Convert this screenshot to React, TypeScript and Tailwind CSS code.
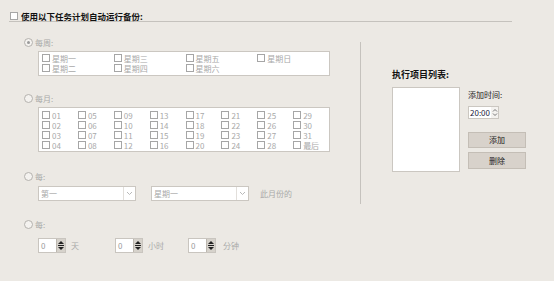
import React from "react";

const weekDays = [
    ["星期一", "星期三", "星期五", "星期日"],
    ["星期二", "星期四", "星期六", ""],
];

const monthRows = [
    ["01", "05", "09", "13", "17", "21", "25", "29"],
    ["02", "06", "10", "14", "18", "22", "26", "30"],
    ["03", "07", "11", "15", "19", "23", "27", "31"],
    ["04", "08", "12", "16", "20", "24", "28", "最后"],
];

const Box = ({ checked = false }: { checked?: boolean }) => (
    <span className="inline-block w-[8px] h-[8px] border border-[#a6a6a6] bg-white shrink-0">
        {checked && <span className="block w-full h-full bg-[#888]" />}
    </span>
);

const Radio = ({ checked = false }: { checked?: boolean }) => (
    <span className="flex items-center justify-center w-[9px] h-[9px] rounded-full border border-[#b4b2ae] bg-[#f4f2ef] shrink-0">
        {checked && <span className="block w-[3px] h-[3px] rounded-full bg-[#9a9a9a]" />}
    </span>
);

const SpinBox = () => (
    <div className="flex w-[28px] h-[15px] border border-[#c9c5bf] bg-white">
        <span className="flex-1 pl-[2px] text-[8px] leading-[13px] text-[#9a9a9a]">0</span>
        <span className="flex flex-col items-center justify-center gap-[1px] w-[9px] bg-[#d6d2cb] border-l border-[#bdb8b0]">
            <span className="w-0 h-0 border-l-[3px] border-r-[3px] border-b-[3px] border-l-transparent border-r-transparent border-b-[#222]" />
            <span className="w-[6px] h-px bg-[#222]" />
            <span className="w-0 h-0 border-l-[3px] border-r-[3px] border-t-[3px] border-l-transparent border-r-transparent border-t-[#222]" />
        </span>
    </div>
);

const Select = ({ value }: { value: string }) => (
    <div className="flex w-[98px] h-[15px] border border-[#cbc7c1] bg-white">
        <span className="flex-1 pl-[2px] text-[8px] leading-[13px] text-[#a8a8a8]">{value}</span>
        <span className="flex items-center justify-center w-[12px] border-l border-[#e2dfdb]">
            <svg width="7" height="5" viewBox="0 0 7 5">
                <path d="M1 1 L3.5 3.5 L6 1" fill="none" stroke="#b9b9b9" strokeWidth="1" />
            </svg>
        </span>
    </div>
);

const App = () => {
    return (
        <div
            className="w-[554px] h-[281px] bg-[#ece9e4] overflow-hidden text-[#a9a9a9]"
            style={{ fontFamily: '"Noto Sans CJK SC", "Liberation Sans", sans-serif' }}
        >
            {/* header */}
            <div className="flex items-center gap-[3px] pl-[10px] pt-[11px] h-[21px]">
                <Box />
                <span className="text-[8.5px] font-bold text-[#111] leading-[10px]">使用以下任务计划自动运行备份:</span>
            </div>
            <div className="ml-[9px] w-[503px] h-px bg-[#c5c2bd]" />

            <div className="flex">
                {/* left column */}
                <div className="w-[337px] pl-[24px]">
                    <div className="flex items-center gap-[2px] mt-[15px] h-[10px]">
                        <Radio checked />
                        <span className="text-[8px] leading-[9px]">每周:</span>
                    </div>
                    <div className="ml-[14px] mt-[4px] w-[292px] h-[25px] border border-[#cbc7c1] bg-white pl-[3px] pt-[1px]">
                        {weekDays.map((row, i) => (
                            <div key={i} className="flex h-[10px] items-center">
                                {row.map((d, j) => (
                                    <div key={j} className="flex items-center gap-[2px] w-[72px]">
                                        {d && (
                                            <>
                                                <Box />
                                                <span className="text-[8px] leading-[9px]">{d}</span>
                                            </>
                                        )}
                                    </div>
                                ))}
                            </div>
                        ))}
                    </div>

                    <div className="flex items-center gap-[2px] mt-[17px] h-[10px]">
                        <Radio />
                        <span className="text-[8px] leading-[9px]">每月:</span>
                    </div>
                    <div className="ml-[14px] mt-[4px] w-[292px] h-[45px] border border-[#cbc7c1] bg-white pl-[3px] pt-[2px]">
                        {monthRows.map((row, i) => (
                            <div key={i} className="flex h-[10px] items-center">
                                {row.map((d, j) => (
                                    <div key={j} className="flex items-center gap-[2px] w-[36px]">
                                        <Box />
                                        <span className="text-[8px] leading-[9px]">{d}</span>
                                    </div>
                                ))}
                            </div>
                        ))}
                    </div>

                    <div className="flex items-center gap-[2px] mt-[19px] h-[10px]">
                        <Radio />
                        <span className="text-[8px] leading-[9px]">每:</span>
                    </div>
                    <div className="flex items-center ml-[14px] mt-[5px]">
                        <Select value="第一" />
                        <div className="ml-[15px]">
                            <Select value="星期一" />
                        </div>
                        <span className="ml-[11px] text-[8px]">此月份的</span>
                    </div>

                    <div className="flex items-center gap-[2px] mt-[18px] h-[10px]">
                        <Radio />
                        <span className="text-[8px] leading-[9px]">每:</span>
                    </div>
                    <div className="flex items-center ml-[14px] mt-[9px]">
                        <SpinBox />
                        <span className="ml-[5px] w-[44px] text-[8px]">天</span>
                        <SpinBox />
                        <span className="ml-[5px] w-[40px] text-[8px]">小时</span>
                        <SpinBox />
                        <span className="ml-[7px] text-[8px]">分钟</span>
                    </div>
                </div>

                {/* divider */}
                <div className="w-px h-[162px] mt-[20px] ml-[23px] bg-[#c5c2bd]" />

                {/* right column */}
                <div className="pl-[31px]">
                    <div className="mt-[48px] h-[10px] text-[9px] font-bold leading-[10px] text-[#111]">执行项目列表:</div>
                    <div className="flex mt-[7px]">
                        <div className="w-[68px] h-[85px] border border-[#cbc7c1] bg-white" />
                        <div className="ml-[8px] flex flex-col">
                            <span className="mt-[3px] text-[8px] leading-[10px] text-[#222]">添加时间:</span>
                            <div className="flex mt-[6px] w-[31px] h-[13px] border border-[#cbc7c1] bg-[#f4f2ef]">
                                <span className="w-[22px] bg-white text-[8px] leading-[11px] text-[#1a1a3a] pl-[1px]">20:00</span>
                                <span className="flex-1 flex items-center justify-center">
                                    <svg width="6" height="9" viewBox="0 0 6 9">
                                        <path d="M1 3.5 L3 1.5 L5 3.5 M1 5.5 L3 7.5 L5 5.5" fill="none" stroke="#777" strokeWidth="1" />
                                    </svg>
                                </span>
                            </div>
                            <button className="mt-[13px] w-[58px] h-[16px] bg-[#d8d2cb] border border-[#c4beb6] text-[8px] text-[#222] leading-[14px]">添加</button>
                            <button className="mt-[4px] w-[58px] h-[17px] bg-[#d8d2cb] border border-[#c4beb6] text-[8px] text-[#222] leading-[15px]">删除</button>
                        </div>
                    </div>
                </div>
            </div>
        </div>
    );
};

export default App;
